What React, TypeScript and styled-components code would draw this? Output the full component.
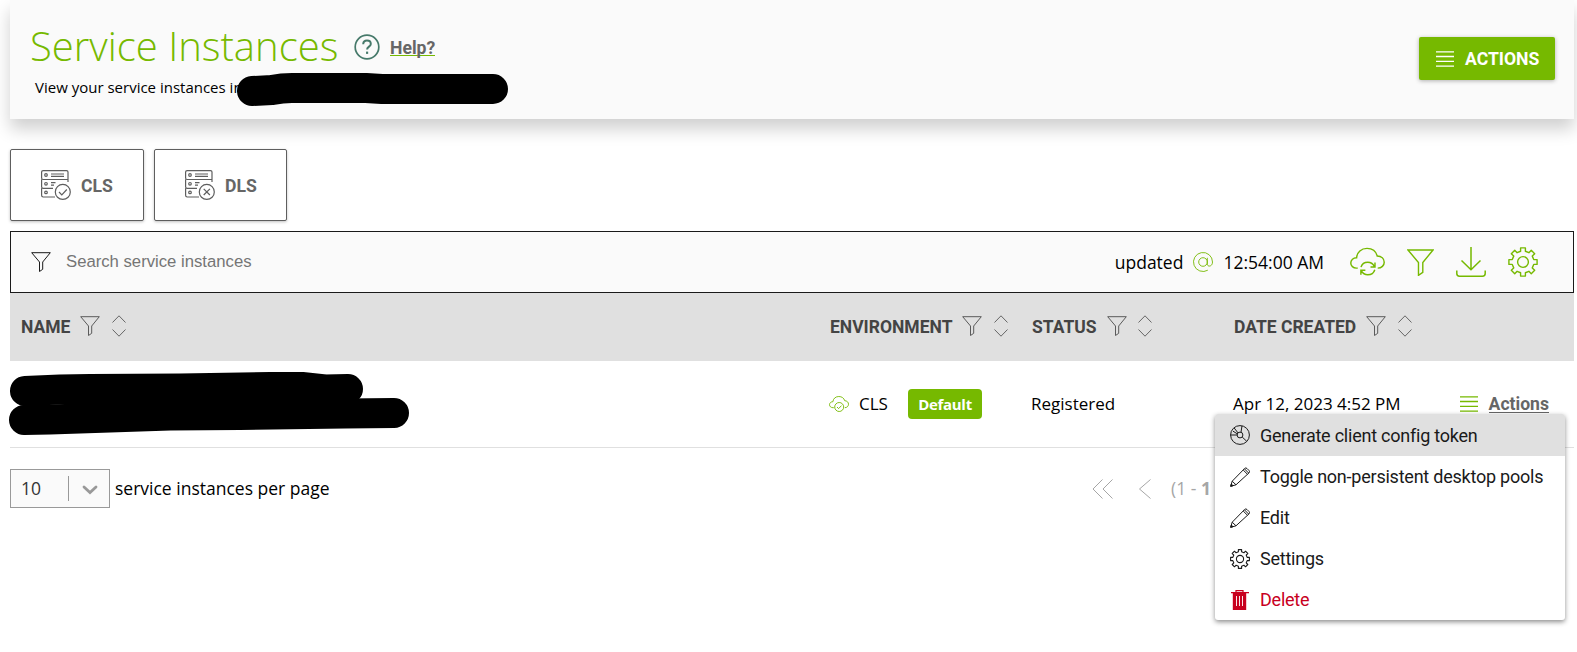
import React from 'react';
import styled, { createGlobalStyle, css } from 'styled-components';

const GREEN = '#76b900';
const GREY = '#666';
const openSans = "'Open Sans', 'Noto Sans', sans-serif";
const roboto = "Roboto, 'Liberation Sans', sans-serif";

const GlobalStyle = createGlobalStyle`
  *, *::before, *::after { box-sizing: border-box; }
  body {
    margin: 0;
    background: #fff;
    color: #1a1a1a;
    font-family: ${openSans};
    font-size: 17.5px;
    overflow: hidden;
  }
  svg { display: block; flex: none; }
`;

const Page = styled.main`
  width: 1577px;
  height: 652px;
  padding: 0 3px 0 10px;
  overflow: hidden;
`;

const Header = styled.header`
  display: flex;
  justify-content: space-between;
  height: 119px;
  padding: 37px 19px 0 20px;
  background: #fafafa;
  box-shadow: 0 10px 16px rgba(0, 0, 0, 0.19);
`;

const Heading = styled.div`
  margin-top: -19px;
`;

const TitleRow = styled.div`
  display: flex;
  align-items: center;
  height: 56px;
  > svg { margin-top: 2px; }
`;

const Title = styled.h1`
  margin: 0 16px 0 0;
  width: 308px;
  font-weight: 300;
  font-size: 40px;
  line-height: 56px;
  white-space: nowrap;
  color: ${GREEN};
`;

const HelpLink = styled.a`
  margin: 2px 0 0 10px;
  font: 700 17.6px/21px ${roboto};
  color: ${GREY};
  border-bottom: 1px solid ${GREEN};
  height: 18px;
`;

const Subtitle = styled.p`
  position: relative;
  margin: 3px 0 0 5px;
  font-size: 15px;
  line-height: 20px;
  color: #000;
`;

const Redaction = styled.svg`
  fill: none;
  stroke: #000;
  stroke-width: 30px;
  stroke-linecap: round;
  stroke-linejoin: round;
`;

const SubtitleRedaction = styled(Redaction)`
  position: absolute;
  left: 202px;
  top: -4px;
`;

const ActionsButton = styled.button`
  display: flex;
  align-items: center;
  gap: 11px;
  width: 136px;
  height: 43px;
  padding: 0 0 0 17px;
  border: 0;
  border-radius: 2px;
  background: ${GREEN};
  color: #fff;
  font: 700 17.6px ${roboto};
  box-shadow: 0 1px 4px rgba(0, 0, 0, 0.3);
`;

const Cards = styled.div`
  display: flex;
  gap: 10px;
  margin: 30px 0 10px;
`;

const Card = styled.button<{ $width: number }>`
  display: flex;
  align-items: center;
  gap: 10px;
  width: ${(p) => p.$width}px;
  height: 72px;
  padding: 0 0 0 30px;
  border: 1px solid #5e5e5e;
  border-radius: 2px;
  background: #fff;
  color: ${GREY};
  font: 700 17.6px ${roboto};
  box-shadow: 0 1px 3px rgba(0, 0, 0, 0.25);
  span { padding-top: 2px; }
`;

const SearchBar = styled.div`
  display: flex;
  align-items: center;
  height: 62px;
  padding: 0 35px 0 20px;
  border: 1px solid #1a1a1a;
  background: #fafafa;
`;

const SearchInput = styled.input`
  flex: 1;
  margin-left: 15px;
  padding: 0;
  border: 0;
  background: transparent;
  font: 16.7px 'Liberation Sans', Arial, sans-serif;
  &::placeholder { color: #757575; opacity: 1; }
`;

const Updated = styled.div`
  display: flex;
  align-items: center;
  gap: 10px;
  margin-right: 26px;
  color: #000;
`;

const Tools = styled.div`
  display: flex;
  align-items: center;
  gap: 22px;
`;

const columns = css`
  display: grid;
  grid-template-columns: 809px 202px 202px 1fr;
  padding-left: 11px;
  align-items: center;
`;

const TableHead = styled.div`
  ${columns}
  height: 68px;
  padding-bottom: 2px;
  background: #e0e0e0;
`;

const HeadCell = styled.div`
  display: flex;
  align-items: center;
  font: 700 17.5px ${roboto};
  color: #444;
  span { padding-top: 2px; }
  svg { margin-left: 10px; }
  svg + svg { margin-left: 11.5px; }
`;

const Row = styled.div`
  ${columns}
  height: 87px;
  border-bottom: 1px solid #e0e0e0;
  font-size: 17px;
  color: #000;
`;

const NameCell = styled.div`
  margin-left: -12px;
`;

const Cell = styled.div`
  display: flex;
  align-items: center;
  margin-left: -1px;
  line-height: 24px;
  padding-bottom: 1px;
`;

const EnvName = styled.span`
  width: 30px;
  margin-left: 10px;
`;

const Badge = styled.span`
  width: 74px;
  margin: 1px 0 0 19px;
  border-radius: 4px;
  background: ${GREEN};
  color: #fff;
  font-weight: 700;
  font-size: 15px;
  letter-spacing: -0.3px;
  line-height: 30px;
  text-align: center;
`;

const RowActions = styled.a`
  display: flex;
  align-items: center;
  gap: 11px;
  margin-left: auto;
  margin-right: 25px;
  color: ${GREY};
  font: 700 17.6px ${roboto};
  text-decoration: none;
  span { border-bottom: 1px solid ${GREY}; height: 18px; line-height: 19px; }
`;

const Footer = styled.footer`
  display: flex;
  align-items: center;
  height: 39px;
  margin-top: 21px;
  color: #000;
  line-height: 24px;
`;

const Label = styled.span`
  margin-top: -2px;
`;

const PageSize = styled.div`
  display: flex;
  align-items: center;
  width: 100px;
  height: 39px;
  margin-right: 5px;
  padding-left: 10px;
  border: 1px solid #999;
  background: #fafafa;
  color: #333;
`;

const Divider = styled.i`
  width: 1px;
  height: 25px;
  margin: 0 13px 0 auto;
  background: #999;
`;

const Chevron = styled.svg`
  margin: 2px 11px 0 0;
`;

const Pager = styled.div`
  display: flex;
  align-items: center;
  margin-left: auto;
  width: 482px;
  color: #a6a6a6;
  span { margin: -1px 0 0 20px; }
`;

const Menu = styled.ul`
  position: absolute;
  left: 1215px;
  top: 414px;
  width: 350px;
  margin: 0;
  padding: 0;
  list-style: none;
  background: #fff;
  border-radius: 3px;
  box-shadow: 0 2px 5px rgba(0, 0, 0, 0.45);
`;

const MenuItem = styled.li<{ $active?: boolean; $danger?: boolean }>`
  display: flex;
  align-items: center;
  gap: 10px;
  height: ${(p) => (p.$active ? 42 : 41)}px;
  padding-left: 15px;
  border-radius: 3px 3px 0 0;
  background: ${(p) => (p.$active ? '#e0e0e0' : 'transparent')};
  color: ${(p) => (p.$danger ? '#c8001e' : '#1a1a1a')};
  font: 400 18px ${roboto};
  letter-spacing: -0.23px;
`;

type IconProps = { size?: number; color?: string; stroke?: number };

const Funnel = ({ size = 20, color = '#1a1a1a', stroke = 1 }: IconProps) => (
  <svg width={size} height={size} viewBox="0 0 20 20" fill="none" stroke={color} strokeWidth={(stroke * 20) / size}>
    <path d="M.7.7h18.6L11.7 10v7.3l-3.2 2.2V10z" />
  </svg>
);

const Sort = () => (
  <svg width="14" height="22" viewBox="0 0 14 22" fill="none" stroke="#666" strokeWidth="1">
    <path d="M.5 7.5 7 .8l6.5 6.7M.5 14.5 7 21.2l6.5-6.7" />
  </svg>
);

const gearPath = (() => {
  const pts: string[] = [];
  const n = 8;
  for (let i = 0; i < n; i++) {
    const a = (i * 2 * Math.PI) / n - Math.PI / 2;
    for (const [r, d] of [[11, -0.22], [14.3, -0.17], [14.3, 0.17], [11, 0.22]]) {
      pts.push(`${(15 + r * Math.cos(a + d)).toFixed(2)} ${(15 + r * Math.sin(a + d)).toFixed(2)}`);
    }
  }
  return `M${pts.join('L')}Z`;
})();

const Gear = ({ size = 30, color = GREEN, stroke = 1.4 }: IconProps) => (
  <svg width={size} height={size} viewBox="0 0 30 30" fill="none" stroke={color} strokeWidth={(stroke * 30) / size} strokeLinejoin="round">
    <path d={gearPath} />
    <circle cx="15" cy="15" r="5.4" />
  </svg>
);

const Lines = ({ color = GREEN }: IconProps) => (
  <svg width="18" height="16" viewBox="0 0 18 16" stroke={color} strokeWidth="1.3">
    <path d="M0 .8h18M0 5.5h18M0 10.4h18M0 15.2h18" />
  </svg>
);

const Help = () => (
  <svg width="26" height="26" viewBox="0 0 26 26" fill="none" stroke="#46796a" strokeWidth="1.7">
    <circle cx="13" cy="13" r="11.8" />
    <path d="M9.2 10.2C9.3 7.7 11 6.6 13 6.6s3.8 1.2 3.8 3.3c0 2.6-3.7 2.9-3.7 5.6" strokeWidth="2" />
    <path d="M13.1 17.6v2.3" strokeWidth="2.1" />
  </svg>
);

const Server = ({ ok }: { ok: boolean }) => (
  <svg width="30" height="30" viewBox="0 0 30 30" fill="none" stroke="#5e5e5e" strokeWidth="1.2">
    <path d="M27 9.5H2.2Q.6 9.5.6 8V2Q.6.6 2.2.6h23.3Q27 .6 27 2v10M.6 9.5v7.2q0 1.6 1.6 1.6H12M.6 18.3v7q0 1.7 1.6 1.7H14" />
    <path d="M10 4h13M10 6.4h13M10 12.7h4.5M10 15.1h3" />
    <circle cx="5" cy="5" r="1.3" />
    <circle cx="5" cy="13.8" r="1.3" />
    <circle cx="5" cy="22.4" r="1.3" />
    <circle cx="21.8" cy="21.9" r="7.5" />
    <path d={ok ? 'm18 22 2.8 2.8 5-5.3' : 'm18.7 18.8 6.2 6.2m0-6.2-6.2 6.2'} />
  </svg>
);

const At = () => (
  <svg width="20" height="20" viewBox="0 0 20 20" fill="none" stroke={GREEN} strokeWidth=".9">
    <circle cx="10" cy="10" r="4.3" />
    <path d="M14.3 5.8v6.3c0 3 5.2 2.8 5.2-2.1A9.5 9.5 0 1 0 14.8 18.2" />
  </svg>
);

const CloudSync = () => (
  <svg width="35" height="30" viewBox="0 0 36 30" fill="none" stroke={GREEN} strokeWidth="1.5">
    <path d="M8 21.3H6.5C3.3 21.3.8 19 .8 16s2.6-5.4 6-5.3C7.2 5 11.7 1 17.5 1c5.3 0 9.2 2.9 10.5 7.8 4.2.2 7.2 2.8 7.2 6.4 0 3.4-2.7 6.1-6.7 6.1" />
    <path d="M11.3 20.3c1-3.2 3.7-5 7-5 2.9 0 5.3 1.5 6.7 4.2M25.7 15.5v4.6h-4.6M25.5 22.9c-1 3.3-3.8 5.3-7.2 5.3-2.9 0-5.3-1.6-6.7-4.3M11.2 28v-4.5h4.6" />
  </svg>
);

const CloudCheck = () => (
  <svg width="20" height="16" viewBox="0 0 20 16" fill="none" stroke={GREEN} strokeWidth=".9">
    <path d="M4.8 11.7H4c-2 0-3.5-1.3-3.5-3S2 5.7 3.9 5.7C4.2 2.6 6.6.5 9.8.5c3 0 5.2 1.6 5.9 4.2 2.3.1 3.8 1.6 3.8 3.5s-1.5 3.5-3.7 3.5" />
    <circle cx="10.2" cy="11" r="4.5" />
    <path d="m8 11 1.6 1.6 2.9-3" />
  </svg>
);

const Download = () => (
  <svg width="30" height="30" viewBox="0 0 30 30" fill="none" stroke={GREEN} strokeWidth="1.5">
    <path d="M15 0v22.5M5.5 13.5l9.5 9.3 9.5-9.3M.8 23.5v3q0 2.7 2.7 2.7h23q2.7 0 2.7-2.7v-3" />
  </svg>
);

const Token = () => (
  <svg width="20" height="20" viewBox="0 0 20 20" fill="none" stroke="#1a1a1a" strokeWidth="1">
    <circle cx="10" cy="10" r="9.4" />
    <circle cx="10" cy="10" r="2.9" />
    <path d="M11 7.2 12 .8M8 7.9 4.2 3M7.4 8.9 3 6.2M7.1 10H.6M12.2 12l4.6 4.4" />
  </svg>
);

const Pencil = () => (
  <svg width="20" height="20" viewBox="0 0 20 20" fill="none" stroke="#1a1a1a" strokeWidth="1" strokeLinejoin="round">
    <path d="M.7 19.3 2.2 14.2 14.6 1.5q1.2-1.2 2.4 0l2 2q1.2 1.2 0 2.4L6 17.8zM2.2 14.2 6 17.8M13.2 3l4.2 4.2M14.4 1.8l4.2 4.2" />
    <path d="M.7 19.3l.6-2.3 1.7 1.7z" fill="#1a1a1a" />
  </svg>
);

const Trash = () => (
  <svg width="20" height="20" viewBox="0 0 20 20" fill="none" stroke="#c8001e">
    <path d="M1 2.7h18M6 2.5V.6h7v1.9" strokeWidth="1.2" />
    <path d="M2.8 3h13.4v17H2.8z" fill="#c8001e" stroke="none" />
    <path d="M6.500 6v10M9.500 6v10M12.500 6v10" stroke="#fff" strokeWidth=".9" />
  </svg>
);

const HeaderColumn = ({ label }: { label: string }) => (
  <HeadCell>
    <span>{label}</span>
    <Funnel color="#5a5a5a" />
    <Sort />
  </HeadCell>
);

export default function App() {
  return (
    <Page>
      <GlobalStyle />
      <Header>
        <Heading>
          <TitleRow>
            <Title>Service Instances</Title>
            <Help />
            <HelpLink>Help?</HelpLink>
          </TitleRow>
          <Subtitle>
            View your service instances in
            <SubtitleRedaction width="271" height="34" viewBox="237 73 271 34">
              <path d="M252 91 272 90Q282 88 292 88H366L382 89H493" />
            </SubtitleRedaction>
          </Subtitle>
        </Heading>
        <ActionsButton>
          <Lines color="#fff" />
          ACTIONS
        </ActionsButton>
      </Header>

      <Cards>
        <Card $width={134}><Server ok /><span>CLS</span></Card>
        <Card $width={133}><Server ok={false} /><span>DLS</span></Card>
      </Cards>

      <SearchBar>
        <Funnel />
        <SearchInput placeholder="Search service instances" />
        <Updated>
          <span>updated</span>
          <At />
          <span>12:54:00 AM</span>
        </Updated>
        <Tools>
          <CloudSync />
          <Funnel size={27} color={GREEN} stroke={1.4} />
          <Download />
          <Gear />
        </Tools>
      </SearchBar>

      <TableHead>
        <HeaderColumn label="NAME" />
        <HeaderColumn label="ENVIRONMENT" />
        <HeaderColumn label="STATUS" />
        <HeaderColumn label="DATE CREATED" />
      </TableHead>

      <Row>
        <NameCell>
          <Redaction width="400" height="64" viewBox="9 372 400 64">
            <path d="M25 391 60 389.5 90 389 180 388.5 270 387 302 387 325 389.5 348 389" />
            <path d="M24 420 50 419.5 170 415.5 240 415 345 413.5 394 413" />
          </Redaction>
        </NameCell>
        <Cell>
          <CloudCheck />
          <EnvName>CLS</EnvName>
          <Badge>Default</Badge>
        </Cell>
        <Cell>Registered</Cell>
        <Cell>
          Apr 12, 2023 4:52 PM
          <RowActions>
            <Lines />
            <span>Actions</span>
          </RowActions>
        </Cell>
      </Row>

      <Footer>
        <PageSize>
          <Label>10</Label>
          <Divider />
          <Chevron width="16" height="10" viewBox="0 0 16 10" fill="none" stroke="#999" strokeWidth="2.8" strokeLinecap="round">
            <path d="m2 2 6 5.5L14 2" />
          </Chevron>
        </PageSize>
        <Label>service instances per page</Label>
        <Pager>
          <svg width="59" height="20" viewBox="0 0 59 20" fill="none" stroke="#a6a6a6">
            <path d="M10.5.5 1 10l9.5 9.5M20.5.5 11 10l9.5 9.5M58.5.5 47.5 10l11 9.5" />
          </svg>
          <span>(1 - <b>1</b> of 1)</span>
        </Pager>
      </Footer>

      <Menu>
        <MenuItem $active><Token />Generate client config token</MenuItem>
        <MenuItem><Pencil />Toggle non-persistent desktop pools</MenuItem>
        <MenuItem><Pencil />Edit</MenuItem>
        <MenuItem><Gear size={20} color="#1a1a1a" stroke={1.1} />Settings</MenuItem>
        <MenuItem $danger><Trash />Delete</MenuItem>
      </Menu>
    </Page>
  );
}
